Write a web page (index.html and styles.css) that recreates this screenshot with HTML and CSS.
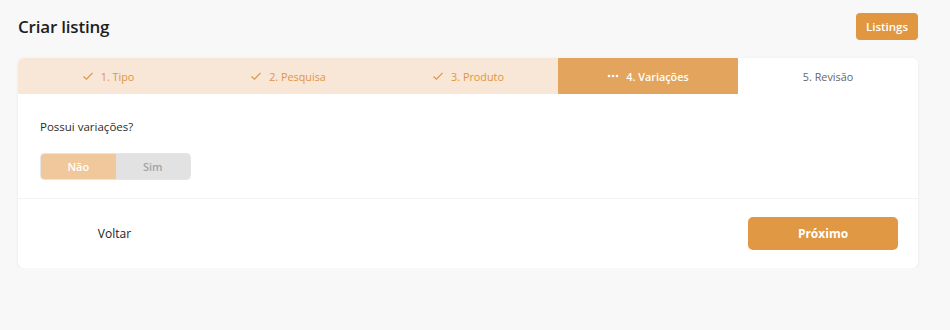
FILE: index.html
```html
<!DOCTYPE html>
<html lang="pt">
<head>
<meta charset="utf-8">
<link rel="stylesheet" href="styles.css">
</head>
<body>
<div class="page">
  <header class="top">
    <h1 class="title">Criar listing</h1>
    <button class="btn-listings">Listings</button>
  </header>
  <section class="card">
    <nav class="steps">
      <div class="step done"><svg class="ico" viewBox="0 0 12 12" width="12" height="12"><path d="M1.5 6.5 L4.5 9.2 L10.5 2.8" fill="none" stroke="currentColor" stroke-width="1.2"/></svg>1. Tipo</div>
      <div class="step done"><svg class="ico" viewBox="0 0 12 12" width="12" height="12"><path d="M1.5 6.5 L4.5 9.2 L10.5 2.8" fill="none" stroke="currentColor" stroke-width="1.2"/></svg>2. Pesquisa</div>
      <div class="step done"><svg class="ico" viewBox="0 0 12 12" width="12" height="12"><path d="M1.5 6.5 L4.5 9.2 L10.5 2.8" fill="none" stroke="currentColor" stroke-width="1.2"/></svg>3. Produto</div>
      <div class="step active"><svg class="ico" viewBox="0 0 12 6" width="12" height="6"><circle cx="2" cy="3" r="1.3" fill="currentColor"/><circle cx="6" cy="3" r="1.3" fill="currentColor"/><circle cx="10" cy="3" r="1.3" fill="currentColor"/></svg>4. Variações</div>
      <div class="step todo">5. Revisão</div>
    </nav>
    <div class="body">
      <p class="question">Possui variações?</p>
      <div class="toggle">
        <span class="opt on">Não</span>
        <span class="opt off">Sim</span>
      </div>
    </div>
    <footer class="foot">
      <button class="btn-back">Voltar</button>
      <button class="btn-next">Próximo</button>
    </footer>
  </section>
</div>
</body>
</html>
```
FILE: styles.css
```css
html, body {
  margin: 0;
  padding: 0;
  background: #f8f8f8;
  font-family: "Open Sans", "Noto Sans", sans-serif;
}
.page {
  padding: 13px 32px 0 18px;
}
.top {
  display: flex;
  justify-content: space-between;
  align-items: center;
  height: 27px;
  margin-bottom: 18px;
}
.title {
  margin: 0;
  font-size: 17px;
  font-weight: 600;
  color: #1e1e1e;
  letter-spacing: -0.2px;
}
.btn-listings {
  border: 0;
  background: #e0973f;
  color: #fff;
  font-family: inherit;
  font-size: 11.5px;
  font-weight: 600;
  height: 27px;
  width: 62px;
  border-radius: 4px;
  padding: 0;
}
.card {
  width: 900px;
  background: #fff;
  border-radius: 6px;
  box-shadow: 0 1px 4px rgba(0,0,0,0.06);
  overflow: hidden;
}
.steps {
  display: grid;
  grid-template-columns: repeat(5, 180px);
  height: 36px;
}
.step {
  display: flex;
  align-items: center;
  justify-content: center;
  gap: 7px;
  font-size: 10.8px;
}
.step.done {
  background: #f8e6d6;
  color: #e0963f;
}
.step.active {
  background: #e3a55d;
  color: #fff;
  font-weight: 600;
}
.step.todo {
  background: #fff;
  color: #666;
}
.ico { display: block; }
.body {
  padding: 25px 22px 18px;
  border-bottom: 1px solid #f4f4f4;
}
.question {
  margin: 0 0 19px;
  font-size: 11.5px;
  color: #2b2b2b;
}
.toggle {
  display: flex;
  width: 149px;
  height: 25px;
  border: 1px solid #e6e6e6;
  border-radius: 4px;
  overflow: hidden;
}
.opt {
  flex: 1;
  display: flex;
  align-items: center;
  justify-content: center;
  font-size: 11px;
  font-weight: 600;
}
.opt.on { background: #f0c89b; color: #fff; }
.opt.off { background: #e2e2e2; color: #a3a3a3; }
.foot {
  display: flex;
  justify-content: space-between;
  align-items: center;
  padding: 18px 20px 18px 22px;
}
.btn-back {
  border: 0;
  background: transparent;
  font-family: inherit;
  font-size: 12px;
  color: #222;
  width: 149px;
  height: 33px;
  padding: 0;
}
.btn-next {
  border: 0;
  background: #e09844;
  color: #fff;
  font-family: inherit;
  font-size: 12px;
  font-weight: 700;
  width: 150px;
  height: 33px;
  border-radius: 5px;
}
```
